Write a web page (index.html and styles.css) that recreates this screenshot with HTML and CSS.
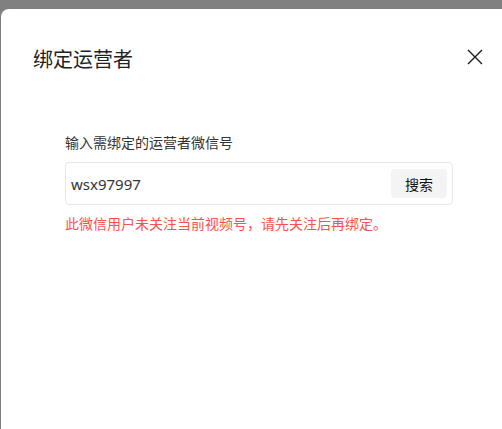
FILE: index.html
```html
<!DOCTYPE html>
<html lang="zh-CN">
<head>
<meta charset="utf-8">
<title>绑定运营者</title>
<link rel="stylesheet" href="styles.css">
</head>
<body>
<div class="modal">
  <div class="modal-header">
    <h1 class="modal-title">绑定运营者</h1>
    <button class="close-btn" aria-label="关闭">
      <svg width="16" height="16" viewBox="0 0 16 16"><path d="M1 1L15 15M15 1L1 15" stroke="#1a1a1a" stroke-width="1.4" fill="none"/></svg>
    </button>
  </div>
  <div class="modal-body">
    <div class="field-label">输入需绑定的运营者微信号</div>
    <div class="search-box">
      <span class="search-value">wsx97997</span>
      <button class="search-btn">搜索</button>
    </div>
    <div class="error-msg">此微信用户未关注当前视频号，请先关注后再绑定。</div>
  </div>
</div>
</body>
</html>
```
FILE: styles.css
```css
html, body {
  margin: 0;
  padding: 0;
}
body {
  background: #808080;
  height: 429px;
  overflow: hidden;
  font-family: "Noto Sans CJK SC", "Noto Sans", sans-serif;
  color: #333;
}
.modal {
  margin: 9px 0 0 1px;
  height: 420px;
  background: #fff;
  border-radius: 8px 0 0 0;
  padding: 0 19px 0 32px;
}
.modal-header {
  display: flex;
  justify-content: space-between;
  align-items: center;
  padding-top: 36px;
}
.modal-title {
  margin: 0;
  font-size: 20px;
  font-weight: 400;
  line-height: 28px;
  color: #222;
}
.close-btn {
  width: 16px;
  height: 16px;
  padding: 0;
  border: 0;
  background: none;
  display: flex;
  margin-top: -4px;
}
.modal-body {
  padding-left: 32px;
  padding-top: 59px;
}
.field-label {
  font-size: 14px;
  line-height: 20px;
  color: #333;
}
.search-box {
  margin-top: 10px;
  width: 388px;
  height: 43px;
  box-sizing: border-box;
  border: 1px solid #e7e7e7;
  border-radius: 4px;
  display: flex;
  align-items: center;
  justify-content: space-between;
  padding: 0 5px 0 5px;
}
.search-value {
  font-size: 15px;
  color: #333;
  font-family: "Noto Sans", sans-serif;
}
.search-btn {
  width: 56px;
  height: 29px;
  border: 0;
  border-radius: 4px;
  background: #f4f4f4;
  font-family: "Noto Sans CJK SC", sans-serif;
  font-size: 14px;
  color: #111;
  padding: 0;
}
.error-msg {
  margin-top: 8px;
  font-size: 14px;
  line-height: 20px;
  color: #fa5151;
}
```
